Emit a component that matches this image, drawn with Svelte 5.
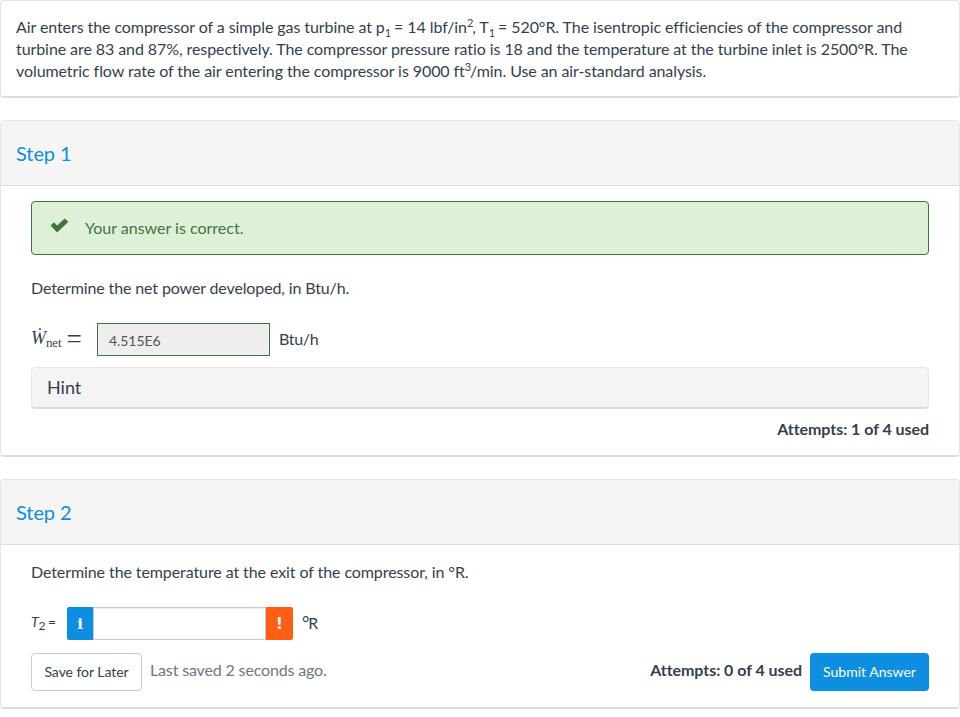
<script>
  const problem = 'Air enters the compressor of a simple gas turbine at';
</script>

<main class="page">
  <section class="card intro">
    <p>{problem} p<sub>1</sub> = 14 lbf/in<sup>2</sup>, T<sub>1</sub> = 520°R. The isentropic efficiencies of the compressor and turbine are 83 and 87%, respectively. The compressor pressure ratio is 18 and the temperature at the turbine inlet is 2500°R. The volumetric flow rate of the air entering the compressor is 9000 ft<sup>3</sup>/min. Use an air-standard analysis.</p>
  </section>

  <section class="card">
    <header class="head"><h2>Step 1</h2></header>
    <div class="body one">
      <div class="alert">
        <svg class="check" viewBox="0 0 20 16" width="19" height="15" aria-hidden="true"><path d="M0.5 8 L4 4.5 L7.5 8 L15.5 0.5 L19.5 4 L7.5 15.5 Z" fill="#3c763d"/></svg>
        <span>Your answer is correct.</span>
      </div>
      <p class="question q1">Determine the net power developed, in Btu/h.</p>
      <div class="answer a1">
        <span class="math"><span class="w">W<i class="dot"></i></span><span class="net">net</span><span class="eq">=</span></span>
        <div class="filled">4.515E6</div>
        <span class="unit">Btu/h</span>
      </div>
      <div class="hint">Hint</div>
      <div class="attempts-row"><strong>Attempts: 1 of 4 used</strong></div>
    </div>
  </section>

  <section class="card">
    <header class="head"><h2>Step 2</h2></header>
    <div class="body two">
      <p class="question q2">Determine the temperature at the exit of the compressor, in °R.</p>
      <div class="answer a2">
        <span class="t2"><i>T</i><sub>2</sub> =</span>
        <div class="group">
          <span class="addon info">i</span>
          <div class="field"></div>
          <span class="addon warn">!</span>
        </div>
        <span class="unit deg"><span class="ring">°</span>R</span>
      </div>
      <div class="actions">
        <button class="later">Save for Later</button>
        <span class="saved">Last saved 2 seconds ago.</span>
        <strong class="attempts">Attempts: 0 of 4 used</strong>
        <button class="submit">Submit Answer</button>
      </div>
    </div>
  </section>
</main>

<style>
  :global(body) {
    margin: 0;
    background: #fff;
    color: #333f4d;
    font-family: Lato, "Open Sans", sans-serif;
    font-size: 16px;
    letter-spacing: -0.07px;
  }
  .page {
    display: flex;
    flex-direction: column;
    gap: 22px;
    height: 717px;
    box-sizing: border-box;
  }
  .card {
    background: #fff;
    border: 1px solid #e4e4e4;
    border-bottom: 2px solid #dcdcdc;
    border-radius: 4px;
  }
  .intro { height: 98px; box-sizing: border-box; padding: 15px 15px 0; }
  .intro p { margin: 0; line-height: 22px; letter-spacing: -0.08px; }
  sub, sup { font-size: 11px; line-height: 0; margin-right: -1px; }
  .head {
    height: 64px;
    background: #f5f5f5;
    border-bottom: 1px solid #dedede;
    display: flex;
    align-items: center;
    padding: 0 15px;
  }
  h2 { margin: 0; font-size: 20px; font-weight: 400; color: #0d8ee0; }
  .body { padding: 0 30px; }
  .one { padding-top: 15px; height: 269px; box-sizing: border-box; }
  .two { padding-top: 15px; height: 162px; box-sizing: border-box; }
  .alert {
    display: flex;
    align-items: center;
    height: 54px;
    box-sizing: border-box;
    background: #dff0d8;
    border: 1px solid #3c763d;
    border-radius: 4px;
    padding-left: 18px;
    color: #3c763d;
    letter-spacing: 0;
  }
  .alert span { margin-top: -2px; }
  .check { margin-right: 16px; margin-top: -6px; }
  .question { margin: 0; line-height: 22px; }
  .q1 { margin-top: 22px; letter-spacing: -0.13px; }
  .answer { display: flex; align-items: center; }
  .a1 { margin-top: 24px; height: 33px; }
  .math { display: inline-flex; align-items: baseline; width: 66px; font-family: "Liberation Serif", serif; color: #333f4d; margin-top: -3px; }
  .w { position: relative; font-style: italic; font-size: 18px; }
  .dot { position: absolute; left: 8px; top: 0; width: 2px; height: 2px; border-radius: 50%; background: #333f4d; }
  .net { font-size: 13px; position: relative; top: 3px; }
  .eq { font-size: 27px; line-height: 0; margin-left: 5px; position: relative; top: 4px; }
  .filled {
    width: 173px;
    height: 33px;
    box-sizing: border-box;
    background: #eee;
    border: 1px solid #3c763d;
    display: flex;
    align-items: center;
    padding: 1px 0 0 11px;
    font-size: 14px;
    color: #555;
  }
  .unit { margin-left: 9px; margin-top: -3px; letter-spacing: -0.3px; }
  .hint {
    margin-top: 11px;
    height: 42px;
    box-sizing: border-box;
    background: #f4f4f4;
    border: 1px solid #e6e6e6;
    border-bottom: 2px solid #dcdcdc;
    border-radius: 4px;
    display: flex;
    align-items: center;
    padding: 0 0 2px 15px;
    font-size: 18px;
    letter-spacing: 0;
  }
  .attempts-row { display: flex; justify-content: flex-end; margin-top: 9px; line-height: 22px; }
  strong { font-weight: 700; color: #333f4d; letter-spacing: -0.04px; }
  .q2 { margin-top: 1px; letter-spacing: -0.09px; }
  .a2 { margin-top: 24px; height: 33px; }
  .t2 { width: 36px; font-size: 14px; margin-top: -5px; }
  .t2 sub { font-size: 12px; }
  .group { display: flex; width: 226px; height: 33px; }
  .addon {
    width: 26px;
    display: flex;
    align-items: center;
    justify-content: center;
    color: #fff;
    font-weight: 700;
    font-family: "DejaVu Serif", serif;
    font-size: 15px;
  }
  .info { background: #0d8ee0; border-radius: 2px 0 0 2px; }
  .warn { width: 27px; background: #ff5f14; border-radius: 0 2px 2px 0; font-family: "DejaVu Sans", sans-serif; }
  .field {
    flex: 1;
    box-sizing: border-box;
    background: #fff;
    border: 1px solid #ccc;
    box-shadow: inset 0 1px 1px rgba(0, 0, 0, .075);
  }
  .deg { margin-left: 9px; margin-top: -3px; }
  .ring { font-size: 18px; line-height: 0; margin-right: -1px; }
  .actions { display: flex; align-items: center; margin-top: 13px; height: 38px; }
  button { font-family: inherit; font-size: 14px; height: 38px; border-radius: 4px; cursor: pointer; padding: 0 0 2px; letter-spacing: 0; }
  .later { width: 111px; background: #fff; border: 1px solid #ccc; color: #333f4d; letter-spacing: -0.05px; }
  .saved { margin-left: 8px; color: #6d7681; margin-top: -5px; letter-spacing: -0.15px; }
  .attempts { margin-left: auto; margin-right: 8px; margin-top: -6px; }
  .submit { width: 119px; background: #0d8ee0; border: 0; color: #fff; }
</style>
